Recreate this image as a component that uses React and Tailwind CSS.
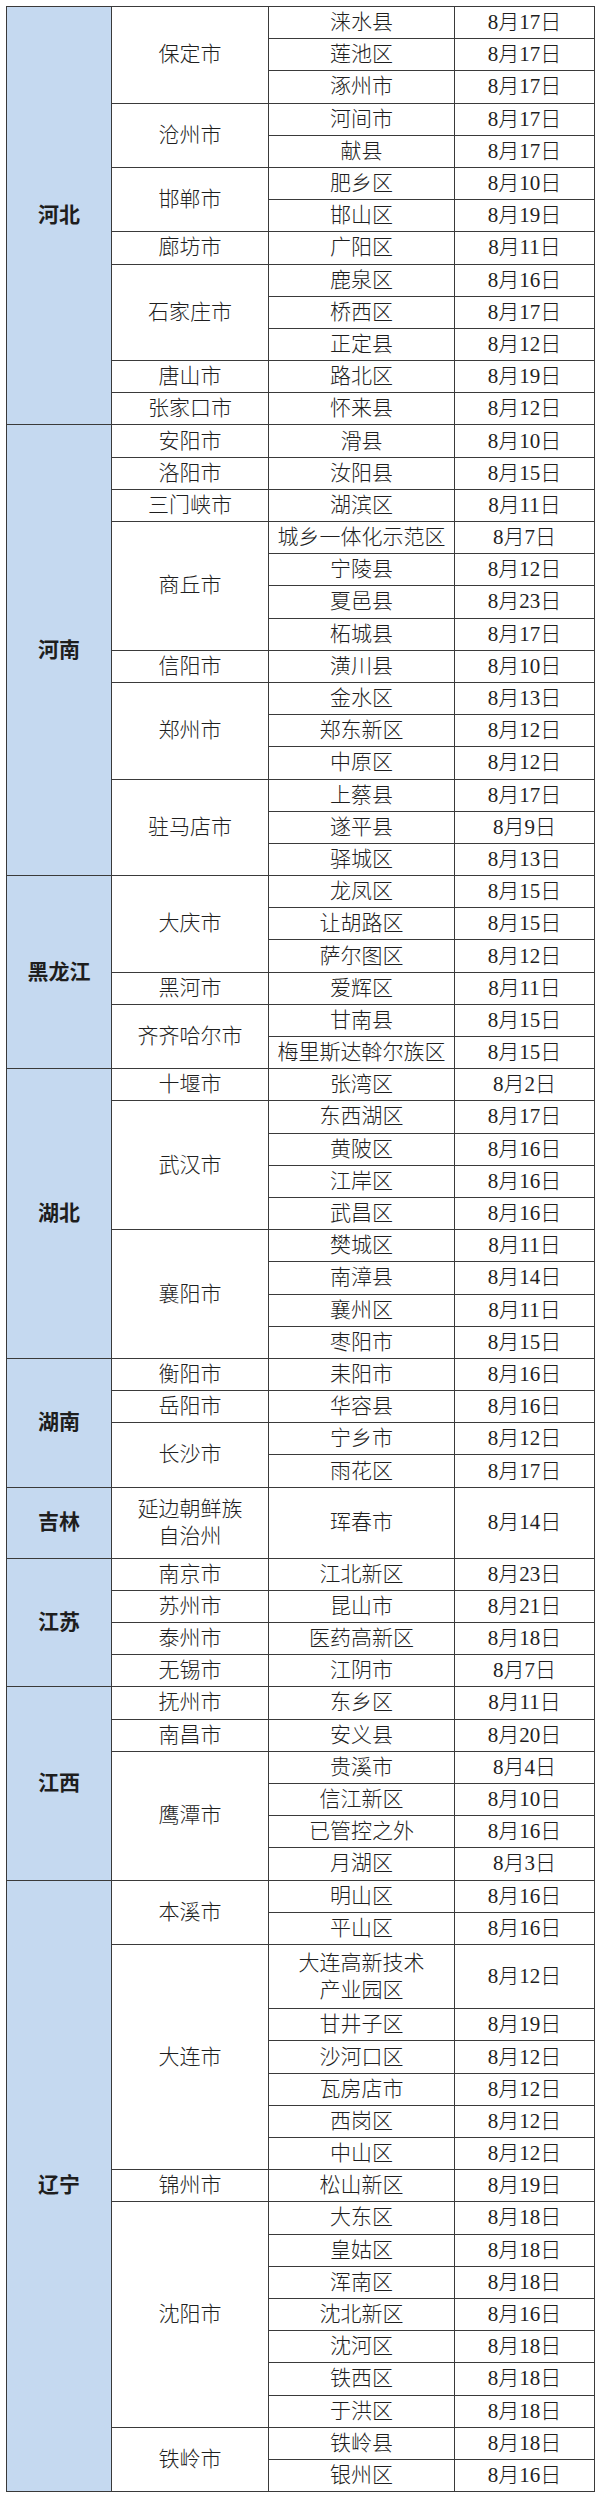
import React from "react"

const data = [
  {
    p: "河北",
    cities: [
      ["保定市", [["涞水县", "8月17日"], ["莲池区", "8月17日"], ["涿州市", "8月17日"]]],
      ["沧州市", [["河间市", "8月17日"], ["献县", "8月17日"]]],
      ["邯郸市", [["肥乡区", "8月10日"], ["邯山区", "8月19日"]]],
      ["廊坊市", [["广阳区", "8月11日"]]],
      ["石家庄市", [["鹿泉区", "8月16日"], ["桥西区", "8月17日"], ["正定县", "8月12日"]]],
      ["唐山市", [["路北区", "8月19日"]]],
      ["张家口市", [["怀来县", "8月12日"]]],
    ],
  },
  {
    p: "河南",
    cities: [
      ["安阳市", [["滑县", "8月10日"]]],
      ["洛阳市", [["汝阳县", "8月15日"]]],
      ["三门峡市", [["湖滨区", "8月11日"]]],
      ["商丘市", [["城乡一体化示范区", "8月7日"], ["宁陵县", "8月12日"], ["夏邑县", "8月23日"], ["柘城县", "8月17日"]]],
      ["信阳市", [["潢川县", "8月10日"]]],
      ["郑州市", [["金水区", "8月13日"], ["郑东新区", "8月12日"], ["中原区", "8月12日"]]],
      ["驻马店市", [["上蔡县", "8月17日"], ["遂平县", "8月9日"], ["驿城区", "8月13日"]]],
    ],
  },
  {
    p: "黑龙江",
    cities: [
      ["大庆市", [["龙凤区", "8月15日"], ["让胡路区", "8月15日"], ["萨尔图区", "8月12日"]]],
      ["黑河市", [["爱辉区", "8月11日"]]],
      ["齐齐哈尔市", [["甘南县", "8月15日"], ["梅里斯达斡尔族区", "8月15日"]]],
    ],
  },
  {
    p: "湖北",
    cities: [
      ["十堰市", [["张湾区", "8月2日"]]],
      ["武汉市", [["东西湖区", "8月17日"], ["黄陂区", "8月16日"], ["江岸区", "8月16日"], ["武昌区", "8月16日"]]],
      ["襄阳市", [["樊城区", "8月11日"], ["南漳县", "8月14日"], ["襄州区", "8月11日"], ["枣阳市", "8月15日"]]],
    ],
  },
  {
    p: "湖南",
    cities: [
      ["衡阳市", [["耒阳市", "8月16日"]]],
      ["岳阳市", [["华容县", "8月16日"]]],
      ["长沙市", [["宁乡市", "8月12日"], ["雨花区", "8月17日"]]],
    ],
  },
  {
    p: "吉林",
    cities: [["延边朝鲜族\n自治州", [["珲春市", "8月14日", "tall"]]]],
  },
  {
    p: "江苏",
    cities: [
      ["南京市", [["江北新区", "8月23日"]]],
      ["苏州市", [["昆山市", "8月21日"]]],
      ["泰州市", [["医药高新区", "8月18日"]]],
      ["无锡市", [["江阴市", "8月7日"]]],
    ],
  },
  {
    p: "江西",
    cities: [
      ["抚州市", [["东乡区", "8月11日"]]],
      ["南昌市", [["安义县", "8月20日"]]],
      ["鹰潭市", [["贵溪市", "8月4日"], ["信江新区", "8月10日"], ["已管控之外", "8月16日"], ["月湖区", "8月3日"]]],
    ],
  },
  {
    p: "辽宁",
    cities: [
      ["本溪市", [["明山区", "8月16日"], ["平山区", "8月16日"]]],
      ["大连市", [["大连高新技术\n产业园区", "8月12日", "double"], ["甘井子区", "8月19日"], ["沙河口区", "8月12日"], ["瓦房店市", "8月12日"], ["西岗区", "8月12日"], ["中山区", "8月12日"]]],
      ["锦州市", [["松山新区", "8月19日"]]],
      ["沈阳市", [["大东区", "8月18日"], ["皇姑区", "8月18日"], ["浑南区", "8月18日"], ["沈北新区", "8月16日"], ["沈河区", "8月18日"], ["铁西区", "8月18日"], ["于洪区", "8月18日"]]],
      ["铁岭市", [["铁岭县", "8月18日"], ["银州区", "8月16日"]]],
    ],
  },
]

const cell = "border border-[#3a3a3a] p-0 text-center align-middle whitespace-pre-line leading-[27px]"

function rowHeight(kind) {
  if (kind === "tall") return "h-[71px]"
  if (kind === "double") return "h-[64.4px]"
  return "h-[32.2px]"
}

export default function App() {
  const rows = []

  data.forEach((prov) => {
    const provSpan = prov.cities.reduce((n, c) => n + c[1].length, 0)
    prov.cities.forEach(([city, districts], ci) => {
      districts.forEach(([district, date, kind], di) => {
        rows.push(
          <tr key={prov.p + city + district} className={rowHeight(kind)}>
            {ci === 0 && di === 0 && (
              <td rowSpan={provSpan} className={`${cell} bg-[#c5d9f0] font-bold`}>
                {prov.p}
              </td>
            )}
            {di === 0 && (
              <td rowSpan={districts.length} className={cell}>
                {city}
              </td>
            )}
            <td className={cell}>{district}</td>
            <td className={cell}>{date}</td>
          </tr>
        )
      })
    })
  })

  return (
    <div className="min-h-[2500px] bg-white pt-[6px] pl-[6px]">
      <table className="w-[588px] table-fixed border-collapse font-['Liberation_Serif','Noto_Sans_CJK_SC',serif] text-[21px] font-light text-[#1e1e1e]">
        <colgroup>
          <col className="w-[105px]" />
          <col className="w-[157px]" />
          <col className="w-[186px]" />
          <col className="w-[140px]" />
        </colgroup>
        <tbody>{rows}</tbody>
      </table>
    </div>
  )
}
